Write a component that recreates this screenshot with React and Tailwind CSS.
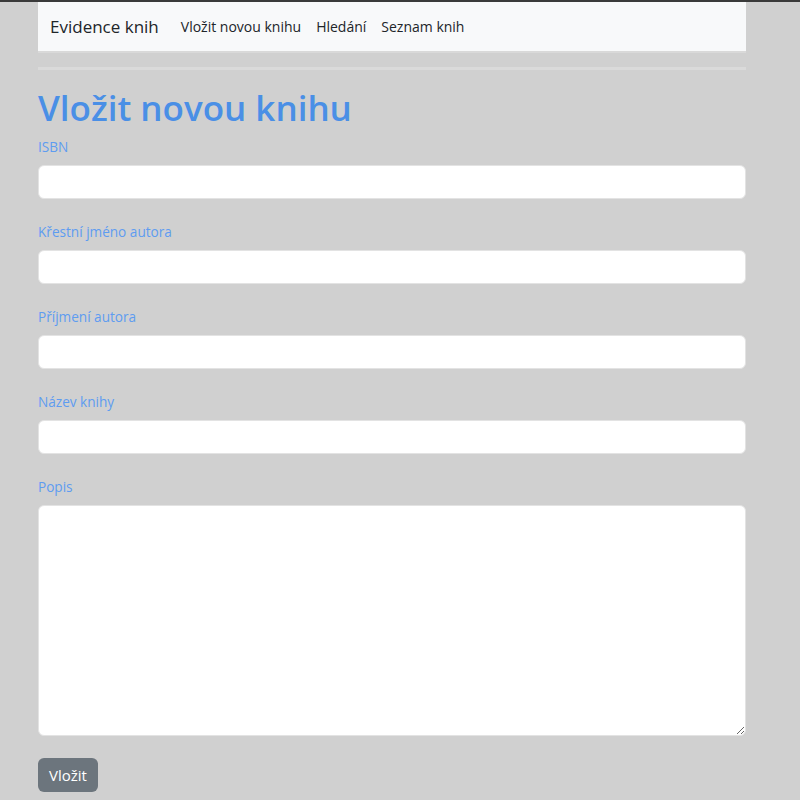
export default function App() {
  const fields = ["ISBN", "Křestní jméno autora", "Příjmení autora", "Název knihy"];
  return (
    <div className="min-h-[800px] bg-[#d0d0d0] border-t-2 border-[#3a3a3a]" style={{ fontFamily: '"Open Sans", "Noto Sans", sans-serif' }}>
      <div className="mx-[38px] w-[708px]">
        <nav className="h-[51px] bg-[#f8f9fa] border-b-2 border-[#d9d9d9] flex items-center px-3">
          <span className="text-[17px] text-[#212529] mr-[22px]">Evidence knih</span>
          <div className="flex gap-[15px] text-[14px] text-[#212529]">
            <span>Vložit novou knihu</span>
            <span>Hledání</span>
            <span>Seznam knih</span>
          </div>
        </nav>
        <hr className="mt-[14px] border-t-[3px] border-[#dadada]" />
        <h1 className="mt-[16px] text-[35px] leading-[44px] font-semibold text-[#4a8fe6]">Vložit novou knihu</h1>
        <form className="mt-[7px]">
          {fields.map((f) => (
            <div key={f} className="mb-[23px]">
              <label className="block text-[13.6px] leading-[20px] text-[#5e9cf0] mb-[8px]">{f}</label>
              <input className="block w-full h-[34px] bg-white rounded-[6px] border border-[#e3e3e3]" />
            </div>
          ))}
          <div>
            <label className="block text-[13.6px] leading-[20px] text-[#5e9cf0] mb-[8px]">Popis</label>
            <textarea className="block w-full h-[231px] bg-white rounded-[6px] border border-[#e3e3e3]" />
          </div>
          <button type="button" className="mt-[22px] h-[34px] px-[11px] bg-[#6c757d] text-white text-[15px] rounded-[6px]">Vložit</button>
        </form>
      </div>
    </div>
  );
}
